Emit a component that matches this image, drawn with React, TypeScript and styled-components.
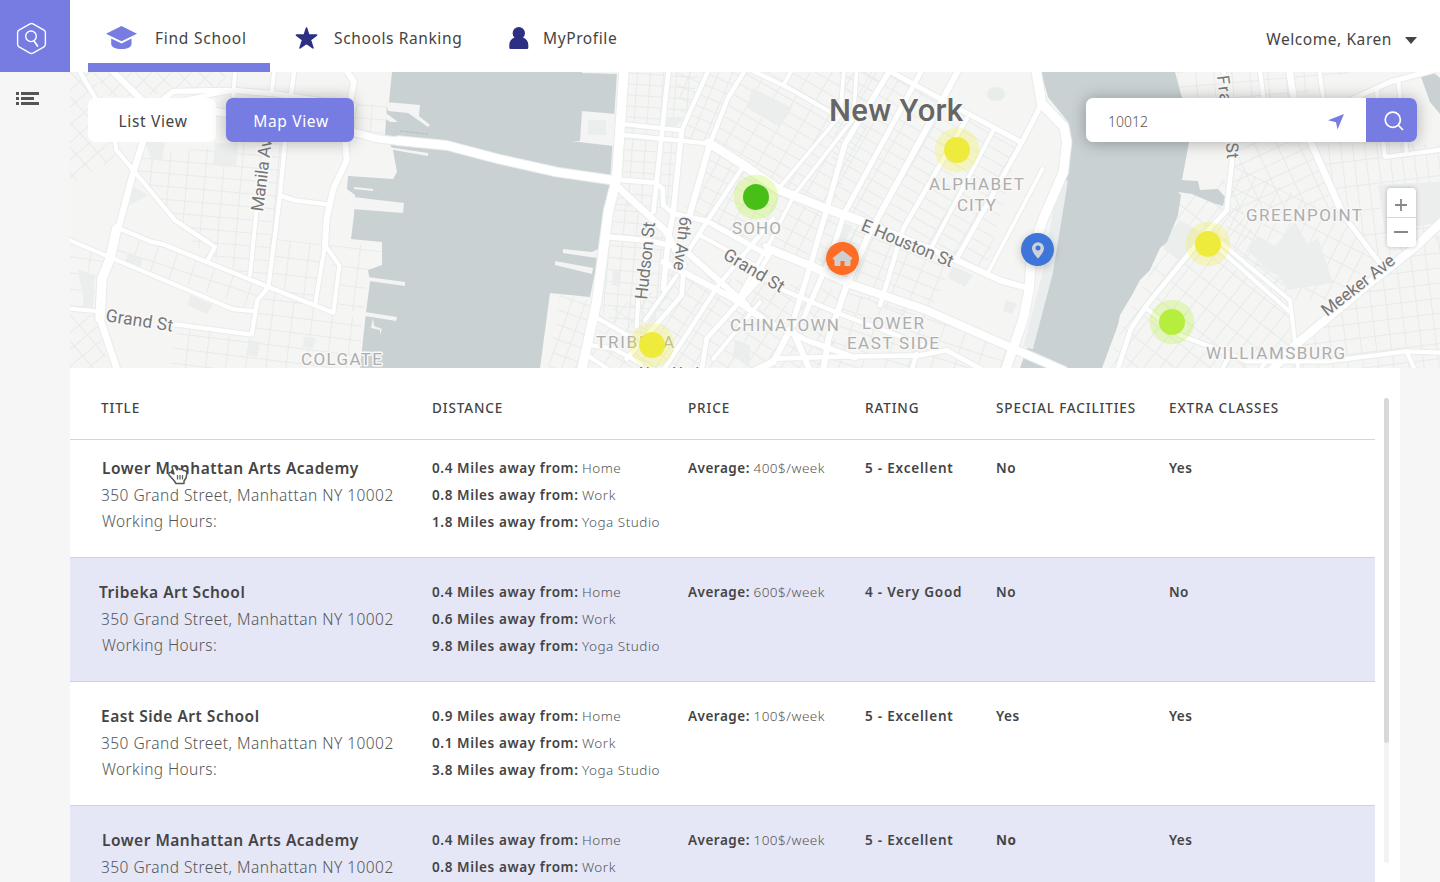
import React from "react";
import styled, { createGlobalStyle } from "styled-components";

const accent = "#777ce3";
const navy = "#2d2f83";
const ink = "#444";

const GlobalStyle = createGlobalStyle`
  * { box-sizing: border-box; }
  body { margin: 0; background: #f6f6f6; }
  button, input { font: inherit; letter-spacing: inherit; border: 0; padding: 0; background: none; }
`;

const Page = styled.div`
  height: 882px;
  overflow: hidden;
  display: grid;
  grid-template-columns: 70px 1fr;
  grid-template-rows: 72px 1fr;
  font-family: "Noto Sans", "Open Sans", sans-serif;
  color: ${ink};
`;

const Brand = styled.div`
  background: ${accent};
  padding: 22px 0 0 16px;
`;

const Header = styled.header`
  background: #fff;
  display: flex;
  justify-content: space-between;
  padding: 0 23px 0 18px;
`;

const Nav = styled.nav`
  display: flex;
`;

const NavItem = styled.a<{ $active?: boolean; $width: number; $pad: number; $gap: number }>`
  display: flex;
  align-items: center;
  width: ${(p) => p.$width}px;
  padding: 13px 0 0 ${(p) => p.$pad}px;
  gap: ${(p) => p.$gap}px;
  border-bottom: 9px solid ${(p) => (p.$active ? accent : "transparent")};
  white-space: nowrap;
`;

const Label = styled.span<{ $size: number; $space: number; $weight?: number; $color?: string }>`
  font-size: ${(p) => p.$size}px;
  letter-spacing: ${(p) => p.$space}px;
  font-weight: ${(p) => p.$weight ?? 400};
  color: ${(p) => p.$color ?? ink};
  white-space: nowrap;
`;

const Account = styled.div`
  display: flex;
  align-items: center;
  gap: 13px;
  padding-top: 6px;
`;

const Caret = styled.i`
  border: 6px solid transparent;
  border-top: 7px solid ${ink};
  border-bottom: 0;
  margin-top: 3px;
`;

const Sidebar = styled.aside`
  padding: 20px 0 0 16px;

  svg {
    display: block;
  }
`;

const Main = styled.main`
  min-width: 0;
`;

const MapPanel = styled.section`
  position: relative;
  height: 296px;
  overflow: hidden;
`;

const MapDrawing = styled.svg`
  display: block;
`;

const MapControls = styled.div`
  position: absolute;
  inset: 26px 23px auto 18px;
  display: flex;
  justify-content: space-between;
`;

const Toggle = styled.div`
  display: flex;
  gap: 10px;
`;

const ViewButton = styled.button<{ $active?: boolean }>`
  width: 128px;
  height: 44px;
  padding: 1px 0 0 2px;
  border-radius: 7px;
  background: ${(p) => (p.$active ? accent : "#fff")};
  box-shadow: ${(p) => (p.$active ? "0 0 16px rgba(0,0,0,.28)" : "none")};
`;

const Search = styled.div`
  display: flex;
  width: 331px;
  height: 44px;
  border-radius: 7px;
  overflow: hidden;
  background: #fff;
`;

const SearchShadow = styled.div`
  border-radius: 7px;
  box-shadow: 0 1px 16px rgba(0, 0, 0, 0.3);
`;

const SearchField = styled.div`
  flex: 1;
  display: flex;
  align-items: center;
  justify-content: space-between;
  padding: 3px 22px 0 22px;
`;

const SearchButton = styled.button`
  width: 51px;
  display: grid;
  place-items: center;
  background: ${accent};
  padding: 1px 0 0 4px;
`;

const Zoom = styled.div`
  position: absolute;
  right: 24px;
  top: 116px;
  width: 29px;
  height: 59px;
  display: grid;
  grid-template-rows: 30px 29px;
  background: #fff;
  border-radius: 4px;
  box-shadow: 0 0 4px rgba(0, 0, 0, 0.25);
`;

const ZoomButton = styled.button<{ $first?: boolean }>`
  display: grid;
  place-items: center;
  border-bottom: ${(p) => (p.$first ? "1px solid #d8d8d8" : "0")};
  padding: ${(p) => (p.$first ? "5px 1px 0 0" : "0 1px 1px 0")};
`;

const Results = styled.section`
  position: relative;
  width: 1330px;
  height: 514px;
  background: #fff;
  display: flex;
  justify-content: space-between;
`;

const Table = styled.div`
  width: 1305px;
`;

const columns = "331px 256px 177px 131px 173px 1fr";

const HeadRow = styled.div`
  display: grid;
  grid-template-columns: ${columns};
  height: 72px;
  padding: 30px 0 0 31px;
  border-bottom: 1px solid #d5d6da;
  line-height: 20px;
`;

const Row = styled.div<{ $tinted?: boolean; $first?: boolean }>`
  display: grid;
  grid-template-columns: ${columns};
  height: ${(p) => (p.$first ? 118 : 124)}px;
  padding: ${(p) => (p.$first ? 15 : 21)}px 0 0 31px;
  background: ${(p) => (p.$tinted ? "#e5e6f6" : "#fff")};
  border-bottom: 1px solid #d0d1df;
`;

const Cell = styled.div<{ $title?: boolean }>`
  display: flex;
  flex-direction: column;
  font-size: ${(p) => (p.$title ? 15.5 : 13.5)}px;
  line-height: ${(p) => (p.$title ? 26.5 : 27)}px;
`;

const Line = styled.div<{ $shift?: number }>`
  white-space: nowrap;
  margin-left: ${(p) => p.$shift ?? 0}px;
`;

const Scrollbar = styled.div`
  width: 5px;
  height: 465px;
  margin: 30px 11px 0 0;
  border-radius: 3px;
  background: #f3f3f3;
`;

const Thumb = styled.div`
  height: 345px;
  border-radius: 3px;
  background: #d8d8d8;
`;

const Cursor = styled.svg`
  position: absolute;
  left: 97px;
  top: 96px;
`;

type Road = [number, string];

const jersey: Road[] = [
  [13, "30,0 80,85 135,210 140,235 315,445 435,525 410,570"],
  [18, "130,0 210,78 250,110"],
  [19, "225,190 190,300 145,470"],
  [28, "140,470 120,560 96,620 90,740"],
  [20, "90,740 142,895"],
  [16, "225,190 262,95 310,58 490,55 610,65 725,82 850,100"],
  [12, "260,120 350,82 480,58"],
  [12, "495,0 490,70"],
  [12, "612,0 605,65"],
  [13, "672,0 645,210 630,370 595,645 562,685 545,788 300,755"],
  [12, "560,410 540,610"],
  [18, "832,0 852,30 840,90 825,200 830,265 790,350 770,440 765,520"],
  [12, "765,520 808,580 790,722"],
  [13, "790,722 595,645 280,517 245,510 150,470"],
  [13, "630,370 675,385 780,398"],
  [12, "765,520 735,700"],
  [12, "0,505 130,560 490,712 555,718"],
  [12, "-5,710 85,718"],
  [22, "430,118 850,180 920,200 990,208"],
];

const village: Road[] = [
  [28, "672,-5 650,320 625,420 590,690 545,895"],
  [26, "-5,206 140,220 300,262 470,300 640,325"],
  [14, "805,0 770,330 760,420"],
  [13, "655,155 845,175 925,-5"],
  [13, "660,188 930,215 985,75 1035,-5"],
  [16, "845,175 820,420 805,500 790,650"],
  [18, "930,215 870,425"],
  [14, "640,322 765,332 788,350 790,400 820,425"],
  [20, "640,330 680,370 800,480 850,580"],
  [16, "630,495 740,505 810,520"],
  [16, "820,425 920,447 1105,550"],
  [12, "895,487 1100,600"],
  [18, "790,570 850,600 1000,680 1090,740"],
  [18, "860,540 1040,700"],
  [14, "850,600 845,670 680,860"],
  [12, "830,610 735,745"],
  [12, "715,680 710,765"],
  [13, "595,740 700,800"],
  [13, "575,820 640,830 725,875"],
  [12, "570,855 630,895"],
  [13, "1025,290 920,450 860,545"],
  [13, "1120,440 955,640 790,895"],
  [14, "1080,620 920,800 905,895"],
  [12, "1080,690 940,860"],
];

const eastSide: Road[] = [
  [12, "35,-5 150,50 285,128"],
  [15, "445,-5 600,80 845,212 905,95"],
  [26, "-95,212 0,272 120,355 260,410 400,460"],
  [18, "400,460 640,560 780,625 870,650"],
  [28, "888,-5 905,95 972,165 980,210 970,300 910,440 875,540 868,650 850,740 795,900"],
  [11, "908,290 745,600"],
  [14, "845,212 650,560"],
  [12, "760,175 575,525"],
  [16, "450,-5 315,215 255,430 205,600 160,745"],
  [15, "545,-5 315,420 265,570 190,740"],
  [18, "655,-5 385,490 320,640 265,800 250,895"],
  [14, "680,140 490,470 420,700"],
  [11, "312,-5 300,130 120,345"],
  [11, "350,-5 340,140 165,365 90,510 0,670"],
  [12, "155,-5 130,40"],
  [24, "85,530 220,585 340,640 560,715 820,830 970,895"],
  [13, "75,520 90,545 0,690"],
  [16, "-10,680 60,740 150,780 200,805 345,857"],
  [14, "40,895 110,860 255,855 540,850 620,835 730,895"],
  [18, "165,745 100,870 50,895"],
  [18, "160,780 210,895"],
  [13, "130,655 310,730 590,835"],
  [13, "530,845 515,895"],
];

const brooklyn: Road[] = [
  [12, "430,-5 455,150"],
  [12, "540,-5 550,75"],
  [20, "628,-5 643,90 690,205 790,430"],
  [14, "790,430 905,580"],
  [12, "718,-5 730,80"],
  [15, "800,90 930,30 1060,-5"],
  [12, "890,50 915,255 1085,233"],
  [12, "955,30 980,240"],
  [14, "460,230 440,415 380,480 200,700 153,770 112,895"],
  [12, "400,515 630,720"],
  [12, "420,510 630,685 655,895"],
  [25, "1085,450 1000,530 860,640 645,820 575,895"],
  [13, "200,710 300,790 380,820 500,868 740,868 980,838 1085,842"],
  [12, "980,838 1005,895"],
  [12, "445,855 425,895"],
  [12, "555,870 540,895"],
];

const roadSets: { x: number; roads: Road[] }[] = [
  { x: 70, roads: jersey },
  { x: 400, roads: village },
  { x: 740, roads: eastSide },
  { x: 1080, roads: brooklyn },
];

const grids: { w: number; h: number; angle: number; area: string }[] = [
  { w: 17, h: 13, angle: -42, area: "70,72 92,72 122,142 112,160 70,185" },
  { w: 15, h: 14, angle: -45, area: "92,72 230,72 215,90 140,95 110,98" },
  { w: 18, h: 13, angle: 5, area: "134,157 250,142 284,142 268,285 205,255 175,222 135,175" },
  { w: 20, h: 22, angle: 18, area: "122,228 150,240 265,287 255,310 115,258" },
  { w: 20, h: 17, angle: 7, area: "270,238 325,245 313,308 268,285" },
  { w: 20, h: 15, angle: 7, area: "252,312 268,290 330,315 362,318 360,368 170,368 178,325 250,338" },
  { w: 17, h: 13, angle: -40, area: "70,315 96,315 108,368 70,368" },
  { w: 22, h: 16, angle: 8, area: "70,240 108,255 98,310 70,305" },
  { w: 16, h: 13, angle: 5, area: "356,104 388,104 383,140 352,130" },
  { w: 30, h: 19, angle: 7, area: "330,245 382,245 380,265 368,270 364,310 334,312" },
  { w: 13, h: 11, angle: 4, area: "624,72 700,72 683,128 676,215 610,205" },
  { w: 13, h: 12, angle: 5, area: "614,185 680,255 660,325 640,340 597,310" },
  { w: 13, h: 11, angle: 23, area: "676,72 744,72 708,142 683,138" },
  { w: 19, h: 12, angle: 30, area: "744,72 890,72 830,215 740,165 708,143" },
  { w: 14, h: 13, angle: 27, area: "710,145 740,165 875,225 840,275 750,240 680,218" },
  { w: 27, h: 11, angle: 30, area: "840,72 891,72 1020,143 985,270 828,210" },
  { w: 19, h: 12, angle: 22, area: "842,212 955,260 920,330 835,280" },
  { w: 15, h: 13, angle: 33, area: "600,315 690,275 845,290 830,368 590,368" },
  { w: 22, h: 17, angle: 18, area: "840,290 925,313 1010,350 1000,368 828,368" },
  { w: 13, h: 14, angle: 20, area: "560,295 590,300 578,368 548,368" },
  { w: 18, h: 15, angle: -5, area: "1177,72 1350,72 1290,100 1300,145 1188,140" },
  { w: 20, h: 13, angle: -25, area: "1230,140 1308,140 1340,210 1225,215" },
  { w: 12, h: 25, angle: -7, area: "1315,140 1440,145 1440,240 1380,258 1345,215" },
  { w: 13, h: 22, angle: 38, area: "1175,200 1225,180 1292,300 1298,368 1106,368 1125,320 1165,245" },
  { w: 13, h: 19, angle: 27, area: "1232,165 1340,215 1375,260 1330,300 1292,300 1225,240" },
  { w: 15, h: 15, angle: -7, area: "1300,345 1380,275 1440,235 1440,368 1290,368" },
];

const parks = [
  "145,142 165,142 162,160 151,158",
  "215,143 238,143 236,167 213,165",
  "130,185 148,195 130,205",
  "128,253 143,259 140,268 125,262",
  "78,270 95,275 93,308 85,308",
  "190,295 213,305 207,314 188,305",
  "250,340 260,342 257,357 248,355",
  "304,337 316,338 313,348 303,347",
  "752,88 792,108 780,127 747,108",
  "667,117 684,117 675,128 665,127",
  "840,222 852,226 845,242 835,238",
  "952,266 973,275 965,287 948,278",
  "1006,300 1017,304 1012,314 1003,311",
  "1180,220 1205,235 1185,265 1162,245",
  "1247,250 1258,236 1275,246 1295,222 1308,245 1318,238 1333,283 1288,290 1278,275 1270,272",
  "1378,185 1440,182 1440,222 1385,232",
  "613,271 621,271 620,287 612,285",
  "735,340 750,345 750,368 733,355",
];

const piers = [
  "386,102 420,105 419,116 430,125 428,127 408,113 388,111",
  "386,113 398,122 390,122 383,117",
  "354,187 373,189 373,191 354,189",
  "353,197 404,203 403,213 352,209",
  "368,277 405,282 405,286 369,281",
  "365,312 397,317 396,321 365,316",
  "373,318 371,328 380,330 380,335 382,329 374,326",
  "388,147 428,153 428,156 388,149",
  "582,111 616,114 613,146 579,142 572,141 580,141",
  "563,249 592,252 598,249 597,258 563,253",
  "555,261 593,268 592,274 555,265",
  "582,72 617,72 617,74 582,73",
];

const labels: {
  text: string;
  x: number;
  y: number;
  width: number;
  size: number;
  color: string;
  angle?: number;
  bold?: boolean;
}[] = [
  { text: "New York", x: 829, y: 121, width: 134, size: 31, color: "#666", bold: true },
  { text: "ALPHABET", x: 929, y: 190, width: 95, size: 17, color: "#adadad" },
  { text: "CITY", x: 957, y: 210.5, width: 39, size: 17, color: "#adadad" },
  { text: "SOHO", x: 732, y: 234, width: 49, size: 17, color: "#adadad" },
  { text: "CHINATOWN", x: 730, y: 331, width: 109, size: 17, color: "#adadad" },
  { text: "LOWER", x: 862, y: 329, width: 62, size: 17, color: "#adadad" },
  { text: "EAST SIDE", x: 847, y: 349, width: 92, size: 17, color: "#adadad" },
  { text: "TRIBEKA", x: 596, y: 347.5, width: 78, size: 17, color: "#adadad" },
  { text: "COLGATE", x: 301, y: 365, width: 81, size: 17, color: "#adadad" },
  { text: "GREENPOINT", x: 1246, y: 221, width: 116, size: 17, color: "#adadad" },
  { text: "WILLIAMSBURG", x: 1206, y: 359, width: 139, size: 17, color: "#adadad" },
  { text: "Grand St", x: 105, y: 321, width: 68, size: 17.5, color: "#777", angle: 9 },
  { text: "Manila Ave", x: 263, y: 212, width: 82, size: 17.5, color: "#777", angle: -83 },
  { text: "Hudson St", x: 647, y: 300, width: 78, size: 17.5, color: "#777", angle: -84 },
  { text: "6th Ave", x: 680, y: 216, width: 54, size: 17, color: "#777", angle: 97 },
  { text: "Grand St", x: 722, y: 258, width: 68, size: 17.5, color: "#777", angle: 31 },
  { text: "E Houston St", x: 860, y: 230, width: 98, size: 17.5, color: "#777", angle: 22.5 },
  { text: "Meeker Ave", x: 1327, y: 317, width: 88, size: 17.5, color: "#777", angle: -38 },
  { text: "Fra", x: 1217, y: 76, width: 27, size: 17, color: "#777", angle: 83 },
  { text: "St", x: 1226, y: 143, width: 16, size: 17, color: "#777", angle: 86 },
  { text: "New York", x: 639, y: 378, width: 64, size: 15, color: "#666" },
];

const schools = [
  { x: 756, y: 197, core: "#48bf17", halo: "#b9f33c" },
  { x: 957, y: 150, core: "#eeeb3c", halo: "#f2ef50" },
  { x: 652, y: 345, core: "#eeeb3c", halo: "#f2ef50" },
  { x: 1208, y: 244, core: "#eeeb3c", halo: "#f2ef50" },
  { x: 1172, y: 322, core: "#b6ee3e", halo: "#b9f33c" },
];

function CityMap() {
  return (
    <MapDrawing width="1370" height="296" viewBox="70 72 1370 296">
      <defs>
        {grids.map((g, i) => (
          <pattern
            key={i}
            id={`grid${i}`}
            width={g.w}
            height={g.h}
            patternUnits="userSpaceOnUse"
            patternTransform={`translate(${g.area.split(" ")[0].replace(",", " ")}) rotate(${g.angle})`}
          >
            <path d={`M0 .5H${g.w}M.5 0V${g.h}`} stroke="#e6ebea" strokeWidth="1.1" />
          </pattern>
        ))}
        <filter id="pinShadow" x="-50%" y="-50%" width="200%" height="200%">
          <feDropShadow dx="0" dy="2" stdDeviation="4" floodOpacity=".22" />
        </filter>
      </defs>
      <rect x="70" y="72" width="1370" height="296" fill="#f5f5f4" />
      {grids.map((g, i) => (
        <polygon key={i} points={g.area} fill={`url(#grid${i})`} />
      ))}
      {parks.map((p) => (
        <polygon key={p} points={p} fill="#ebeeed" />
      ))}
      <ellipse cx="996" cy="94" rx="9" ry="7" fill="#e8eceb" />
      <g fill="#c9d1d3">
        <path d="M392 72 389 102 387 104 385 135 393 150 397 172 393 179 348 176 347 189 355 195 354 215 351 239 382 242 382 265 368 270 370 282 366 312 360 368H540L550 293 590 297 600 249 610 184 617 72Z" />
        <path d="M1041 72 1048 97 1068 122 1071 142 1063 185 1053 239 1048 272 1040 312 1027 349 1020 368H1102L1118 325 1120 315 1132 295 1140 280 1150 270 1160 248 1167 242 1178 215 1181 195 1178 192 1192 194 1213 203 1223 206 1225 197 1218 189 1200 190 1198 181 1182 180 1189 142 1182 98 1175 72Z" />
        <path d="M1421 77 1430 102 1440 114V78L1433 72Z" />
      </g>
      <path d="M1063 180 1048 272 1028 348" stroke="#e9eded" strokeWidth="10" fill="none" />
      {piers.map((p) => (
        <polygon key={p} points={p} fill="#f3f4f3" />
      ))}
      <rect x="588" y="120" width="18" height="15" fill="#eaeeed" />
      <path d="M400 131 428 134" stroke="#aeb8ba" strokeWidth=".8" strokeDasharray="4 1" />
      {["#e8eceb", "#fff"].map((color, pass) => (
        <g key={color} fill="none" stroke={color} strokeLinejoin="round" strokeLinecap="round">
          {roadSets.map((set) => (
            <g key={set.x} transform={`translate(${set.x} 72) scale(.33333)`}>
              {set.roads.map(([w, points]) => (
                <polyline key={points} points={points} strokeWidth={pass ? w : w + 6} />
              ))}
            </g>
          ))}
        </g>
      ))}
      {labels.map((l) => (
        <text
          key={`${l.text}${l.x}`}
          transform={`translate(${l.x} ${l.y}) rotate(${l.angle ?? 0})`}
          textLength={l.width}
          fontFamily="Roboto, sans-serif"
          fontSize={l.size}
          fontWeight={l.bold ? 500 : 400}
          fill={l.color}
          stroke="#f8f8f7"
          strokeWidth="3"
          strokeLinejoin="round"
          paintOrder="stroke"
        >
          {l.text}
        </text>
      ))}
      {schools.map((s) => (
        <g key={`${s.x}${s.y}`}>
          <circle cx={s.x} cy={s.y} r="22.3" fill={s.halo} opacity=".3" />
          <circle cx={s.x} cy={s.y} r="13" fill={s.core} />
        </g>
      ))}
      <circle cx="842.5" cy="258.5" r="16.5" fill="#fd6d27" filter="url(#pinShadow)" />
      <path
        d="M842.5 251 852 258.2 851 259.5H850V265.5H845V260.5H840V265.5H835V259.5H834L833 258.2Z"
        fill="#cfcfcf"
        stroke="#cfcfcf"
        strokeLinejoin="round"
      />
      <circle cx="1037.5" cy="249.5" r="16.5" fill="#3c76d8" filter="url(#pinShadow)" />
      <path
        d="M1038 242.2a6 6 0 0 0-6 6c0 4.3 6 10.4 6 10.4s6-6.1 6-10.4a6 6 0 0 0-6-6Zm0 3.4a2.5 2.5 0 1 1 0 5 2.5 2.5 0 0 1 0-5Z"
        fill="#cfd2d6"
      />
    </MapDrawing>
  );
}

const LogoIcon = () => (
  <svg width="32" height="33" viewBox="0 0 32 33" fill="none" stroke="#fff" strokeWidth="1.4" strokeLinejoin="round">
    <path d="M14 1.9Q15.5 1.2 17 1.9L28 8.2Q29.4 9 29.4 10.7V22.3Q29.4 24 28 24.8L17 31.1Q15.5 31.8 14 31.1L3 24.8Q1.6 24 1.6 22.3V10.7Q1.6 9 3 8.2Z" />
    <circle cx="15" cy="14.3" r="5.3" />
    <path d="M18 19 21.5 24" strokeLinecap="round" strokeWidth="1.7" />
  </svg>
);

const CapIcon = () => (
  <svg width="31" height="24" viewBox="0 0 31 24" fill={accent}>
    <path d="M15.5 0 31 7.7 15.5 15.2 0 7.7Z" />
    <path d="M5.2 12.4 15.5 17.4 25.5 12.4V18C25.5 21 21.5 23 15.5 23S5.2 21 5.2 18Z" />
  </svg>
);

const StarIcon = () => (
  <svg width="23" height="23" viewBox="0 0 23 23" fill={navy}>
    <path
      d="M11.5 1 13.8 8.1H21.6L15.4 12.8 18 21 11.5 16.3 5 21 7.6 12.8 1.4 8.1H9.2Z"
      stroke={navy}
      strokeWidth="1.5"
      strokeLinejoin="round"
    />
  </svg>
);

const PersonIcon = () => (
  <svg width="20" height="22" viewBox="0 0 20 22" fill={navy}>
    <ellipse cx="9.8" cy="6.2" rx="6.1" ry="6.2" />
    <path d="M5.5 10.5H14C17.5 12 19.3 14.5 19.3 18V20.5Q19.3 22 18 22H1.6Q.3 22 .3 20.5V18C.3 14.5 2 12 5.5 10.5Z" />
  </svg>
);

const ListIcon = () => (
  <svg width="24" height="14" viewBox="0 0 24 14" fill="#555">
    <path d="M0 0H3V3H0ZM5 0H23V3H5ZM0 5H3V8H0ZM5 5H18V8H5ZM0 10H3V13H0ZM5 10H23V13H5Z" />
  </svg>
);

const rows = [
  { title: "Lower Manhattan Arts Academy", shift: 1, miles: ["0.4", "0.8", "1.8"], price: "400", rating: "5 - Excellent", special: "No", extra: "Yes" },
  { title: "Tribeka Art School", shift: -2, miles: ["0.4", "0.6", "9.8"], price: "600", rating: "4 - Very Good", special: "No", extra: "No" },
  { title: "East Side Art School", shift: 0, miles: ["0.9", "0.1", "3.8"], price: "100", rating: "5 - Excellent", special: "Yes", extra: "Yes" },
  { title: "Lower Manhattan Arts Academy", shift: 1, miles: ["0.4", "0.8", "1.8"], price: "100", rating: "5 - Excellent", special: "No", extra: "Yes", heavy: true },
];

const places = ["Home", "Work", "Yoga Studio"];
const headings = ["TITLE", "DISTANCE", "PRICE", "RATING", "SPECIAL FACILITIES", "EXTRA CLASSES"];

const Strong = ({ children, weight = 600, space = 0.6 }: { children: React.ReactNode; weight?: number; space?: number }) => (
  <Label $size={13.5} $space={space} $weight={weight}>
    {children}
  </Label>
);

const Light = ({ children }: { children: React.ReactNode }) => (
  <Label $size={13.5} $space={0.5} $weight={300} $color="#555">
    {children}
  </Label>
);

export default function App() {
  return (
    <Page>
      <GlobalStyle />
      <Brand>
        <LogoIcon />
      </Brand>
      <Header>
        <Nav>
          <NavItem $active $width={182} $pad={18} $gap={18}>
            <CapIcon />
            <Label $size={15.5} $space={0.75}>Find School</Label>
          </NavItem>
          <NavItem $width={212} $pad={25} $gap={16}>
            <StarIcon />
            <Label $size={15.5} $space={0.62}>Schools Ranking</Label>
          </NavItem>
          <NavItem $width={140} $pad={27} $gap={14}>
            <PersonIcon />
            <Label $size={15.5} $space={0.6}>MyProfile</Label>
          </NavItem>
        </Nav>
        <Account>
          <Label $size={15.5} $space={0.57}>Welcome, Karen</Label>
          <Caret />
        </Account>
      </Header>
      <Sidebar>
        <ListIcon />
      </Sidebar>
      <Main>
        <MapPanel>
          <CityMap />
          <MapControls>
            <Toggle>
              <ViewButton>
                <Label $size={15.5} $space={0.65}>List View</Label>
              </ViewButton>
              <ViewButton $active>
                <Label $size={15.5} $space={0.65} $color="#fff">Map View</Label>
              </ViewButton>
            </Toggle>
            <SearchShadow>
              <Search>
                <SearchField>
                  <Label $size={14} $space={0} $weight={300} $color="#555">10012</Label>
                  <svg width="16" height="16" viewBox="0 0 16 16" fill={accent}>
                    <path d="M16 0 9.5 15.5 8 8.2 0 6.3Z" />
                  </svg>
                </SearchField>
                <SearchButton>
                  <svg width="20" height="20" viewBox="0 0 20 20" fill="none" stroke="#fff" strokeWidth="1.7">
                    <circle cx="8.8" cy="8.8" r="7.6" />
                    <path d="M14 14 19 19" />
                  </svg>
                </SearchButton>
              </Search>
            </SearchShadow>
          </MapControls>
          <Zoom>
            <ZoomButton $first>
              <svg width="12" height="12" stroke="#888" strokeWidth="1.8">
                <path d="M0 6H12M6 0V12" />
              </svg>
            </ZoomButton>
            <ZoomButton>
              <svg width="14" height="2" fill="#888">
                <path d="M0 0H14V2H0Z" />
              </svg>
            </ZoomButton>
          </Zoom>
        </MapPanel>
        <Results>
          <Table>
            <HeadRow>
              {headings.map((h) => (
                <Label key={h} $size={13.5} $space={0.88} $weight={500}>{h}</Label>
              ))}
            </HeadRow>
            {rows.map((r, i) => (
              <Row key={i} $first={i === 0} $tinted={i % 2 === 1}>
                <Cell $title>
                  <Line $shift={r.shift}>
                    <Label $size={15.5} $space={0.5} $weight={600}>{r.title}</Label>
                  </Line>
                  <Line>
                    <Label $size={15.5} $space={0.45} $weight={300} $color="#555">350 Grand Street, Manhattan NY 10002</Label>
                  </Line>
                  <Line $shift={1}>
                    <Label $size={15.5} $space={0.4} $weight={300} $color="#555">Working Hours:</Label>
                  </Line>
                </Cell>
                <Cell>
                  {r.miles.map((m, k) => (
                    <Line key={k}>
                      <Strong>{m} Miles away from:</Strong> <Light>{places[k]}</Light>
                    </Line>
                  ))}
                </Cell>
                <Cell>
                  <Line>
                    <Strong space={0.5}>Average:</Strong> <Light>{r.price}$/week</Light>
                  </Line>
                </Cell>
                <Cell><Strong space={0.8}>{r.rating}</Strong></Cell>
                <Cell><Strong weight={r.heavy ? 700 : 600}>{r.special}</Strong></Cell>
                <Cell><Strong space={0.4}>{r.extra}</Strong></Cell>
              </Row>
            ))}
          </Table>
          <Scrollbar>
            <Thumb />
          </Scrollbar>
          <Cursor width="22" height="22" viewBox="0 0 22 22">
            <path
              d="M5 3Q7 .5 8.5 3L10 6Q11 3.5 13 5.5 15 4.5 16.5 6.5 19.5 6 20 9L19 14 17 17V19.5H9L7 16.5 2 11Q1 8 4 8.5L7 10Z"
              fill="#fff"
              stroke="#555"
              strokeWidth="1.5"
              strokeLinejoin="round"
            />
            <path d="M10.5 11V15.5M13 11V15.5M15.5 11V15.5" stroke="#666" strokeWidth="1.3" />
          </Cursor>
        </Results>
      </Main>
    </Page>
  );
}
